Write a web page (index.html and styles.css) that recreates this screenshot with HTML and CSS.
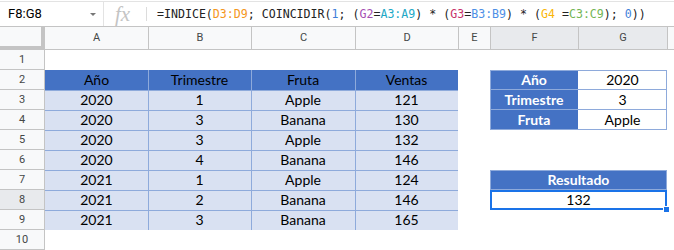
FILE: index.html
```html
<!DOCTYPE html>
<html>
<head lang="es">
    <meta charset="UTF-8">
    <title>INDICE COINCIDIR</title>
    <link rel="stylesheet" href="styles.css">
</head>
<body>
<div class="fbar">
    <div class="namebox">F8:G8<span class="arrow"></span></div>
    <div class="fx">fx</div>
    <div class="formula">=INDICE(<span class="c1">D3:D9</span>; COINCIDIR(<span class="n">1</span>; (<span class="c2">G2</span>=<span class="c3">A3:A9</span>) * (<span class="c4">G3</span>=<span class="c5">B3:B9</span>) * (<span class="c6">G4</span> =<span class="c7">C3:C9</span>); <span class="n">0</span>))</div>
</div>
<div class="sheet">
    <!-- column headers -->
    <div class="corner"></div>
    <div class="ch">A</div><div class="ch">B</div><div class="ch">C</div><div class="ch">D</div>
    <div class="ch">E</div><div class="ch on">F</div><div class="ch on">G</div><div class="ch"></div>

    <div class="rh">1</div>
    <div></div><div></div><div></div><div></div><div></div><div></div><div></div><div></div>

    <div class="rh">2</div>
    <div class="th">Año</div><div class="th l">Trimestre</div><div class="th l">Fruta</div><div class="th l">Ventas</div>
    <div></div><div class="lab top">Año</div><div class="val top">2020</div><div></div>

    <div class="rh">3</div>
    <div class="td">2020</div><div class="td l">1</div><div class="td l">Apple</div><div class="td l">121</div>
    <div></div><div class="lab">Trimestre</div><div class="val">3</div><div></div>

    <div class="rh">4</div>
    <div class="td">2020</div><div class="td l">3</div><div class="td l">Banana</div><div class="td l">130</div>
    <div></div><div class="lab">Fruta</div><div class="val">Apple</div><div></div>

    <div class="rh">5</div>
    <div class="td">2020</div><div class="td l">3</div><div class="td l">Apple</div><div class="td l">132</div>
    <div></div><div></div><div></div><div></div>

    <div class="rh">6</div>
    <div class="td">2020</div><div class="td l">4</div><div class="td l">Banana</div><div class="td l">146</div>
    <div></div><div></div><div></div><div></div>

    <div class="rh">7</div>
    <div class="td">2021</div><div class="td l">1</div><div class="td l">Apple</div><div class="td l">124</div>
    <div></div><div class="res">Resultado</div><div></div>

    <div class="rh on">8</div>
    <div class="td">2021</div><div class="td l">2</div><div class="td l">Banana</div><div class="td l">146</div>
    <div></div><div class="sel">132<span class="handle"></span></div><div></div>

    <div class="rh">9</div>
    <div class="td">2021</div><div class="td l">3</div><div class="td l">Banana</div><div class="td l">165</div>
    <div></div><div></div><div></div><div></div>

    <div class="rh">10</div>
    <div></div><div></div><div></div><div></div><div></div><div></div><div></div><div></div>
</div>
</body>
</html>
```

FILE: styles.css
```css
*{
    margin: 0px;
    padding: 0px;
    box-sizing: border-box;
}
body{
    width: 674px;
    height: 250px;
    overflow: hidden;
    background: #fff;
    font-family: Roboto, "Liberation Sans", sans-serif;
}
.fbar{
    display: flex;
    align-items: center;
    height: 25px;
    margin-top: 1px;
    border-top: 1px solid #e3e3e3;
}
.namebox{
    position: relative;
    width: 104px;
    height: 100%;
    padding-left: 8px;
    line-height: 23px;
    font-size: 13px;
    color: #000;
    border-right: 1px solid #e3e3e3;
}
.arrow{
    position: absolute;
    left: 90px;
    top: 11px;
    border-left: 3px solid transparent;
    border-right: 3px solid transparent;
    border-top: 3px solid #777;
}
.fx{
    width: 43px;
    height: 14px;
    padding-left: 11px;
    line-height: 14px;
    font-family: "Liberation Serif", serif;
    font-style: italic;
    font-size: 21px;
    color: #c4c4c4;
    border-right: 1px solid #dcdcdc;
}
.formula{
    padding-left: 10px;
    font-family: "DejaVu Sans Mono", monospace;
    font-size: 11.6px;
    color: #222;
    white-space: nowrap;
}
.c1{ color: #f4961c; }
.c2{ color: #a54fb3; }
.c3{ color: #1ea8c6; }
.c4{ color: #c8326a; }
.c5{ color: #4d8fe6; }
.c6{ color: #f9b608; }
.c7{ color: #72b554; }
.n{ color: #3f7fd9; }

.sheet{
    display: grid;
    grid-template-columns: 45px 103px 103px 104px 103px 32px 88px 89px 7px;
    grid-template-rows: 24px repeat(10, 20px);
    font-family: Lato, "Liberation Sans", sans-serif;
    font-size: 14px;
    color: #000;
}
.sheet > div{
    text-align: center;
    line-height: 20px;
    white-space: nowrap;
}
.corner{
    background: #f8f9fa;
    border-top: 1px solid #c4c4c4;
    border-right: 4px solid #c4c4c4;
    border-bottom: 4px solid #c4c4c4;
}
.sheet > .ch{
    background: #f8f9fa;
    border-top: 1px solid #c4c4c4;
    border-bottom: 1px solid #c4c4c4;
    border-left: 1px solid #c4c4c4;
    font-family: Roboto, sans-serif;
    font-size: 11px;
    line-height: 22px;
    color: #444746;
}
.sheet > .ch:nth-child(2){
    border-left: none;
}
.sheet > .rh{
    background: #f8f9fa;
    border-right: 1px solid #c4c4c4;
    border-bottom: 1px solid #c4c4c4;
    font-family: Roboto, sans-serif;
    font-size: 11px;
    line-height: 19px;
    color: #444746;
}
.sheet > .on{
    background: #e8eaed;
}
.th{
    background: #4472c4;
}
.th.l{
    box-shadow: inset 1px 0 #8eaadb;
}
.td{
    background: #d9e1f2;
    box-shadow: inset 0 1px #8eaadb;
}
.td.l{
    box-shadow: inset 1px 1px #8eaadb;
}
.sheet > .lab{
    background: #4472c4;
    color: #fff;
    font-weight: bold;
    box-shadow: inset 1px -1px #8eaadb;
}
.lab.top{
    box-shadow: inset 1px -1px #8eaadb, inset 0 1px #8eaadb;
}
.val{
    box-shadow: inset -1px -1px #8eaadb;
}
.val.top{
    box-shadow: inset -1px -1px #8eaadb, inset 0 1px #8eaadb;
}
.sheet > .res{
    grid-column: span 2;
    background: #4472c4;
    color: #fff;
    font-weight: bold;
    box-shadow: inset 0 0 0 1px #8eaadb;
}
.sheet > .sel{
    position: relative;
    grid-column: span 2;
    border: 2px solid #1a73e8;
    line-height: 16px;
}
.handle{
    position: absolute;
    right: -5px;
    bottom: -5px;
    width: 7px;
    height: 7px;
    background: #1a73e8;
    border: 1px solid #fff;
}
```
